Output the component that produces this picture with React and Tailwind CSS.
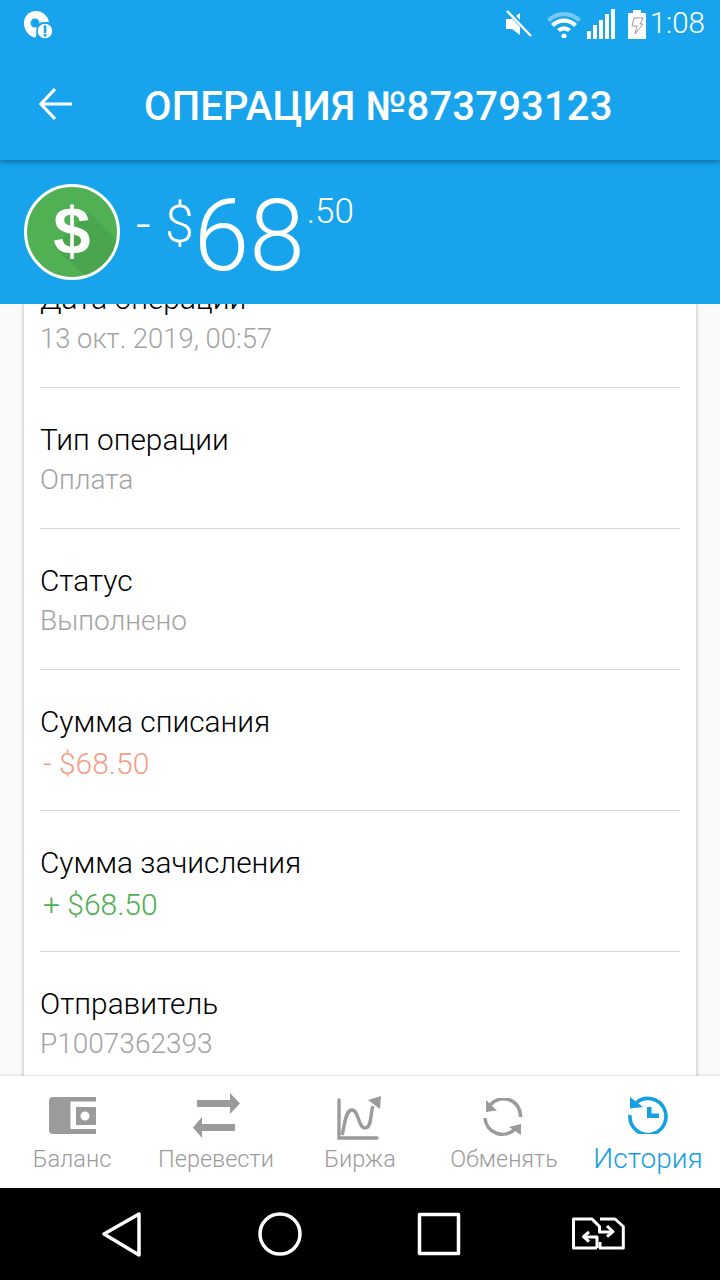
import React from "react";

const rows = [
  { label: "Дата операции", value: "13 окт. 2019, 00:57", color: "text-[#a3a3a3]", size: "text-[27.4px]" },
  { label: "Тип операции", value: "Оплата", color: "text-[#a3a3a3]", size: "text-[28px]" },
  { label: "Статус", value: "Выполнено", color: "text-[#a3a3a3]", size: "text-[28px]" },
  { label: "Сумма списания", value: "- $68.50", color: "text-[#f39c87]", size: "text-[30px] pl-[3px] mt-[2px]" },
  { label: "Сумма зачисления", value: "+ $68.50", color: "text-[#4caf50]", size: "text-[30px] pl-[3px] mt-[2px]" },
  { label: "Отправитель", value: "P1007362393", color: "text-[#a3a3a3]", size: "text-[28px]" },
];

function StatusBar() {
  return (
    <div className="relative z-20 h-[48px] flex items-center justify-between bg-[#18a4ec] pl-[22px] pr-[15px]">
      <svg width="32" height="32" viewBox="0 0 32 32">
        <path d="M14 3a13 14 0 0 1 13 11h-4a7 7 0 0 0-8 5l-1 10c-1 0-1 .5-2 .5C6 27 2 22 2 15S7 3 14 3z" fill="#fff" />
        <circle cx="13" cy="15" r="4.5" fill="#18a4ec" />
        <circle cx="23" cy="23" r="8" fill="#fff" stroke="#18a4ec" strokeWidth="1.5" />
        <rect x="21.8" y="17.5" width="2.6" height="7.5" fill="#18a4ec" />
        <rect x="21.8" y="26" width="2.6" height="2.6" fill="#18a4ec" />
      </svg>
      <div className="flex items-center">
        <svg width="28" height="28" viewBox="0 0 28 28" className="mr-[13px]">
          <path d="M1 9h6l8-6v22l-8-6H1z" fill="#fff" />
          <path d="M3 1l24 25" stroke="#18a4ec" strokeWidth="5" />
          <path d="M2 1l24 25" stroke="#fff" strokeWidth="2.4" />
        </svg>
        <svg width="36" height="28" viewBox="0 0 36 28" className="mr-[5px]">
          <path d="M1 9a24 24 0 0 1 34 0l-3 3a20 20 0 0 0-28 0z" fill="#fff" opacity="0.4" />
          <path d="M5 14a18 18 0 0 1 26 0l-3 3a14 14 0 0 0-20 0z" fill="#fff" />
          <path d="M11 19a10 10 0 0 1 14 0l-3 3a6 6 0 0 0-8 0z" fill="#fff" />
          <circle cx="18" cy="26" r="2.6" fill="#fff" />
        </svg>
        <svg width="28" height="30" viewBox="0 0 28 30" className="mr-[13px]">
          <rect x="0" y="22" width="4" height="8" fill="#fff" />
          <rect x="6" y="16" width="4" height="14" fill="#fff" />
          <rect x="12" y="11" width="4" height="19" fill="#fff" />
          <rect x="18" y="5" width="4" height="25" fill="#fff" />
          <rect x="24" y="0" width="4" height="30" fill="#fff" />
        </svg>
        <svg width="18" height="29" viewBox="0 0 18 29" className="mr-[4px]">
          <path d="M5 0h8v3h5v26H0V3h5z" fill="#fff" />
          <path d="M6 8h9l-3 6h3L7 24l2-8H4z" fill="none" stroke="#9a9a9a" strokeWidth="1" />
        </svg>
        <span className="text-[29.5px] leading-none font-light text-white">1:08</span>
      </div>
    </div>
  );
}

function AppBar() {
  return (
    <div className="relative z-10 h-[112px] flex items-center bg-[#18a4ec] shadow-[0_2px_5px_rgba(0,0,0,0.35)]">
      <svg width="34" height="34" viewBox="0 0 34 34" className="ml-[39px]">
        <path d="M2 17h31M16 2L2 17l14 15" fill="none" stroke="#fff" strokeWidth="3.2" />
      </svg>
      <h1 className="ml-[71px] mt-[6px] text-[40px] leading-none tracking-[0.16px] font-medium text-white whitespace-nowrap">
        ОПЕРАЦИЯ №873793123
      </h1>
    </div>
  );
}

function DollarBadge() {
  return (
    <div className="relative w-[96px] h-[96px] rounded-full border-[3px] border-white bg-[#4fb153] overflow-hidden flex items-center justify-center">
      <svg width="90" height="90" viewBox="0 0 90 90" className="absolute left-0 top-0">
        <path d="M62 25L90 53V90H60L27 60z" fill="#459c49" opacity="0.5" />
      </svg>
      <span className="relative text-[67px] leading-none font-bold font-['Liberation_Sans',sans-serif] text-white mt-[-4px]">$</span>
    </div>
  );
}

function AmountHeader() {
  return (
    <div className="h-[144px] flex items-start bg-[#18a4ec] pl-[24px] pt-[24px]">
      <DollarBadge />
      <div className="flex items-start text-white font-light">
        <span className="ml-[16px] mt-[6px] text-[52px] leading-[70px]">-</span>
        <span className="ml-[14px] mt-[6px] text-[52px] leading-[70px]">$</span>
        <span className="mt-[-6px] text-[100px] leading-[115px]">68</span>
        <span className="ml-[2px] mt-[8px] text-[35px] leading-[40px]">.50</span>
      </div>
    </div>
  );
}

function DetailRow({ row, last }) {
  return (
    <div className={`h-[141px] pt-[33px] ${last ? "" : "border-b border-[#d6d6d6]"}`}>
      <p className="text-[29.8px] leading-[38px] font-light text-black whitespace-nowrap">{row.label}</p>
      <p className={`leading-[42px] font-light whitespace-nowrap ${row.color} ${row.size}`}>
        {row.value}
      </p>
    </div>
  );
}

function WalletIcon() {
  return (
    <svg width="47" height="37" viewBox="0 0 47 37" fill="#9b9b9b" className="mt-[21px]">
      <path d="M4 0h17.5v37H4a4 4 0 0 1-4-4V4a4 4 0 0 1 4-4z" />
      <path d="M21 0h26v4.5H21zM21 32h26v5H21z" />
      <path d="M27 10h20v18H27zM36 14.500a4.500 4.500 0 1 0 0 9 4.500 4.500 0 0 0 0-9z" fillRule="evenodd" />
    </svg>
  );
}

function TransferIcon() {
  return (
    <svg width="47" height="45" viewBox="0 0 47 45" fill="#9b9b9b" className="mt-[17px]">
      <path d="M4 7h33V0l10 10.500L37 21v-7H4z" />
      <path d="M42 31H9v-7L0 34.500 9 45v-7h33z" />
    </svg>
  );
}

function ChartIcon() {
  return (
    <svg width="45" height="44" viewBox="0 -2 45 44" fill="none" stroke="#9b9b9b" strokeWidth="3.400" className="mt-[20px] mr-[2px]">
      <path d="M2 2v38h38" strokeLinecap="round" />
      <path d="M5 37c3-10 3-25 10-25s6 18 13 18 5-14 8-22" />
      <path d="M31 2l13-4-1 13z" fill="#9b9b9b" stroke="none" />
    </svg>
  );
}

function ExchangeIcon() {
  return (
    <svg width="42" height="42" viewBox="0 0 42 42" fill="none" stroke="#9b9b9b" strokeWidth="3.600" className="mt-[22px]">
      <path d="M6 9A17 17 0 0 1 37.500 19" />
      <path d="M2 20A17.500 17.500 0 0 0 32 31" />
      <path d="M3 2v12l11-1.500z" fill="#9b9b9b" stroke="none" />
      <path d="M38 26v11l-12-8z" fill="#9b9b9b" stroke="none" />
    </svg>
  );
}

function HistoryIcon() {
  return (
    <svg width="40" height="40" viewBox="0 0 40 40" fill="none" stroke="#159fe3" strokeWidth="3.600" className="mt-[18px]">
      <path d="M8 9A18 18 0 1 1 2 21" />
      <path d="M2 3v11.500l13-1.500z" fill="#159fe3" stroke="none" />
      <path d="M19 13h4.500v6.500H31V24H19z" fill="#159fe3" stroke="none" />
    </svg>
  );
}

const tabs = [
  { label: "Баланс", Icon: WalletIcon },
  { label: "Перевести", Icon: TransferIcon },
  { label: "Биржа", Icon: ChartIcon },
  { label: "Обменять", Icon: ExchangeIcon },
  { label: "История", Icon: HistoryIcon, active: true },
];

function BottomTabs() {
  return (
    <nav className="relative h-[112px] grid grid-cols-5 bg-white shadow-[0_-1px_2px_rgba(0,0,0,0.12)]">
      {tabs.map(({ label, Icon, active }) => (
        <div key={label} className="flex flex-col items-center">
          <div className="h-[65px] flex items-start justify-center">
            <Icon />
          </div>
          <span
            className={
              active
                ? "text-[28px] leading-[36px] font-light text-[#159fe3] whitespace-nowrap"
                : "text-[23.5px] leading-[36px] font-light text-[#9b9b9b] whitespace-nowrap"
            }
          >
            {label}
          </span>
        </div>
      ))}
    </nav>
  );
}

function SystemNav() {
  return (
    <div className="h-[92px] bg-black">
      <svg width="720" height="92" viewBox="0 0 720 92" fill="none" stroke="#fff" strokeWidth="3.500" strokeLinejoin="round">
        <path d="M104 46l35-20v41z" />
        <circle cx="280" cy="46" r="20" />
        <rect x="419.500" y="26.500" width="39" height="39" />
        <g strokeWidth="3">
          <path d="M597 60H573.500V31H592l7.500 7.500V44H612" />
          <path d="M607 38l6 5.700-6 5" />
          <path d="M597 60V49H584" />
          <path d="M589 44l-5.500 4.700 5.500 5" />
          <path d="M600 31h15l8.300 7.500V60H600V54" />
        </g>
      </svg>
    </div>
  );
}

export default function App() {
  return (
    <div className="w-[720px] h-[1280px] flex flex-col overflow-hidden bg-[#fafafa] font-['Roboto',sans-serif]">
      <StatusBar />
      <AppBar />
      <AmountHeader />
      <main className="flex-1 min-h-0 overflow-hidden px-[24px]">
        <div className="-mt-[57px] bg-white px-[16px] shadow-[0_0_4px_rgba(0,0,0,0.3)]">
          {rows.map((row, i) => (
            <DetailRow key={row.label} row={row} last={i === rows.length - 1} />
          ))}
        </div>
      </main>
      <BottomTabs />
      <SystemNav />
    </div>
  );
}
